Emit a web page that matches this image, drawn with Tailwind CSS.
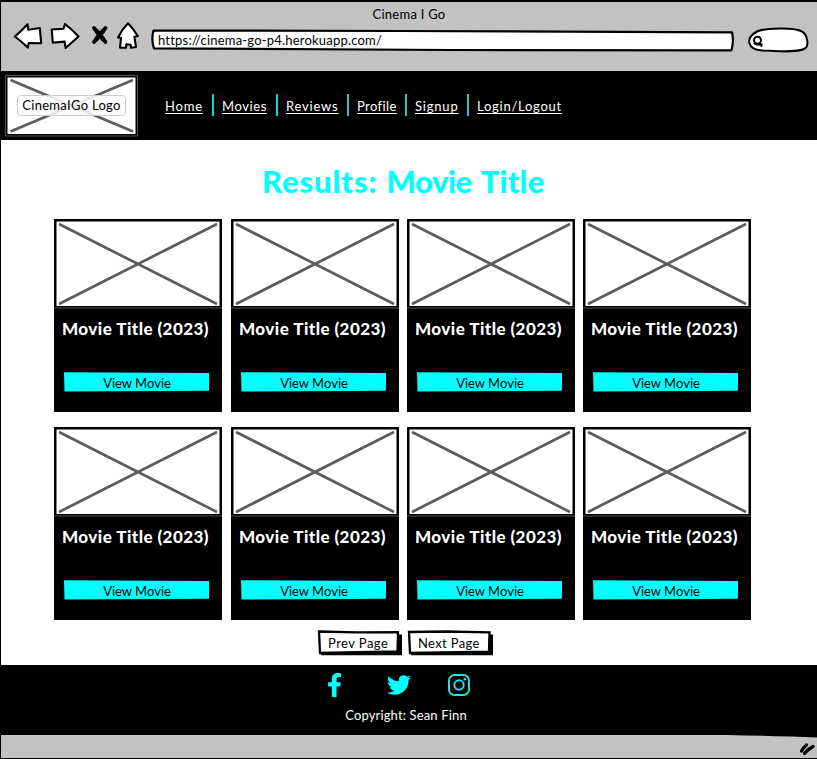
<!DOCTYPE html>
<html lang="en">
<head>
<meta charset="utf-8">
<title>Cinema | Go</title>
<script src="https://cdn.jsdelivr.net/npm/@tailwindcss/browser@4"></script>
</head>
<body class="bg-black">
<div class="flex h-[759px] w-[817px] flex-col overflow-hidden border-l border-t-2 border-black bg-black pb-px font-['Lato','Liberation_Sans',sans-serif] text-[13px] text-black">
  <div class="h-[69px] shrink-0 bg-[#c2c2c2]">
    <div class="h-[18px] text-center leading-[24px]"><span class="tracking-[0.25px]">Cinema I Go</span></div>
    <div class="flex h-[34px] pl-[12px]">
      <svg class="h-[34px] w-[32px] shrink-0" viewBox="13 20 32 34" fill="#fff" stroke="#000" stroke-width="2.1" stroke-linejoin="round"><path d="M14.800 36.500Q21 31.500 27.500 24.300L28.400 29.800 39.800 28 41.200 43.300 28.600 43.100 27.800 47.600Q21 41 14.800 36.500Z"/></svg>
      <svg class="ml-[5px] h-[34px] w-[34px] shrink-0" viewBox="50 20 34 34" fill="#fff" stroke="#000" stroke-width="2.1" stroke-linejoin="round"><path d="M51.700 29.500 63.500 28.700 65 24Q72 29.500 78.500 36.500L65.600 48 64.700 41.600 52.800 42.600Z"/></svg>
      <svg class="ml-[5px] h-[34px] w-[24px] shrink-0" viewBox="89 20 24 34" stroke="#000" stroke-linecap="round" stroke-width="3.800" fill="none"><path d="M94 28 105.500 42M105.500 28 94 42"/><path d="M96.500 31 103 39M103 31 96.500 39" stroke-width="4.600"/></svg>
      <svg class="ml-[2px] h-[34px] w-[28px] shrink-0" viewBox="115 20 28 34" fill="#fff" stroke="#000" stroke-width="2.1" stroke-linejoin="round"><path d="M128 23.300Q133 28.500 137.800 36L134.400 36.800 136 47 131 47.800 130.600 44.800 126.400 44.300 125.900 47.800 120 47.600 121 38 118 37.500Q122 29.500 128 23.300Z"/></svg>
      <div class="relative ml-[7px] h-[34px] w-[586px] shrink-0">
        <svg class="absolute inset-0 h-[34px] w-[586px]" viewBox="150 20 586 34" fill="#fff" stroke="#000" stroke-width="2.2" stroke-linejoin="round"><path d="M153.500 30.500 400 31 732 32.300Q734 41 731.500 50.300L450 50 154 48.300Q151 40 153.500 30.500Z"/></svg>
        <span class="relative ml-[8px] block leading-[41px] tracking-[0.2px]"><span>https://cinema-go-p4.herokuapp.com/</span></span>
      </div>
      <svg class="ml-[11px] h-[34px] w-[64px] shrink-0" viewBox="747 20 64 34" fill="#fff" stroke="#000" stroke-width="2"><path d="M757 31.500C765 28 793 27 801 31 808 34 809 46 805 48.500 795 53.500 775 50.500 762 50.500 747 49.500 745 38 757 31.500Z"/><circle cx="757.500" cy="40.200" r="3.500"/><path d="M754.500 43.500Q758 45 761.800 44.500M759.800 43 761.500 46" stroke-linecap="round"/></svg>
    </div>
  </div>

  <header class="flex h-[69px] shrink-0 pl-[4px] pt-[4px] text-white">
    <div class="relative h-[62px] w-[133px]">
      <svg class="absolute inset-0 h-[62px] w-[133px]" viewBox="0 0 133 62"><path d="M.5 61V.5H132.500V61Z" fill="#000" stroke="#666" stroke-width=".8"/><path d="M2.500 2.500H130.500V59H2.500Z" fill="#fff"/><path d="M5.500 5 128 56.500M128 5 5.500 56.500" stroke="#5c5c5e" stroke-width="2.800"/></svg>
      <div class="absolute left-[12px] top-[20px] flex h-[21px] w-[109px] items-center justify-center rounded-[4px] border border-[#ccc] bg-white/85 text-black"><span class="whitespace-nowrap tracking-[0.3px]">CinemaIGo Logo</span></div>
    </div>
    <nav class="ml-[27px] mt-[19px] flex h-[22px] whitespace-nowrap leading-[24px] underline underline-offset-2">
      <a class="w-[47px] tracking-[0.8px]"><span>Home</span></a>
      <a class="w-[64px] border-l-2 border-[#17d5d9] pl-[8px] tracking-[0.6px]"><span>Movies</span></a>
      <a class="w-[71px] border-l-2 border-[#17d5d9] pl-[8px] tracking-[0.8px]"><span>Reviews</span></a>
      <a class="w-[58px] border-l-2 border-[#40bdc0] pl-[8px] tracking-[0.4px]"><span>Profile</span></a>
      <a class="w-[62px] border-l-2 border-[#40bdc0] pl-[8px] tracking-[0.8px]"><span>Signup</span></a>
      <a class="w-[98px] border-l-2 border-[#40bdc0] pl-[8px] tracking-[0.75px]"><span>Login/Logout</span></a>
    </nav>
  </header>

  <main class="h-[525px] shrink-0 bg-white">
    <h1 class="flex h-[79px] items-center gap-[9px] pl-[261px] pt-[4px] text-[31px] font-black text-[#00ffff]"><span class="tracking-[0.9px]">Results:</span><span class="-tracking-[0.5px]">Movie</span><span class="tracking-[0.2px]">Title</span></h1>
    <div id="movies" class="ml-[53px] grid grid-cols-[177px_176px_176px_168px] grid-rows-[208px_208px]"></div>
    <div class="-mt-[6px] flex pl-[316px]">
      <button class="relative h-[28px] w-[86px]">
        <svg class="absolute inset-0" width="86" height="28" viewBox="0 0 86 28"><path d="M4 5.500H85V26.300H4Z"/><path d="M2 2.500 40 3.300 81 3.200 80.500 22.500 3 24Z" fill="#fff" stroke="#000" stroke-width="2.300"/></svg>
        <span class="absolute left-[11px] top-[4px] whitespace-nowrap leading-[20px] tracking-[0.45px]"><span>Prev Page</span></span>
      </button>
      <button class="relative ml-[4px] h-[28px] w-[88px]">
        <svg class="absolute inset-0" width="88" height="28" viewBox="0 0 88 28"><path d="M4 5.500H86V26.300H4Z"/><path d="M2 3 40 2.500 82.500 3.300 82 22.700 3 24Z" fill="#fff" stroke="#000" stroke-width="2.300"/></svg>
        <span class="absolute left-[11px] top-[4px] whitespace-nowrap leading-[20px] tracking-[0.35px]"><span>Next Page</span></span>
      </button>
    </div>
  </main>

  <footer class="h-[70px] shrink-0 text-white">
    <div class="flex h-[40px] items-center pl-[326px] text-[#00ffff]">
      <svg class="h-[24px] w-[15px]" viewBox="0 0 320 512" preserveAspectRatio="none" fill="currentColor"><path d="M279 288l14-93h-89v-60c0-25 12-50 52-50h41V7S260 0 225 0c-73 0-121 44-121 125v70H23v93h81v224h100V288z"/></svg>
      <svg class="ml-[45px] h-[24px] w-[24px]" viewBox="0 0 512 512" fill="currentColor"><path d="M459.370 151.716c.325 4.548.325 9.097.325 13.645 0 138.720-105.583 298.558-298.558 298.558-59.452 0-114.680-17.219-161.137-47.106 8.447.974 16.568 1.299 25.340 1.299 49.055 0 94.213-16.568 130.274-44.832-46.132-.975-84.792-31.188-98.112-72.772 6.498.974 12.995 1.624 19.818 1.624 9.421 0 18.843-1.300 27.614-3.573-48.081-9.747-84.143-51.980-84.143-102.985v-1.299c13.969 7.797 30.214 12.670 47.431 13.319-28.264-18.843-46.781-51.005-46.781-87.391 0-19.492 5.197-37.360 14.294-52.954 51.655 63.675 129.300 105.258 216.365 109.807-1.624-7.797-2.599-15.918-2.599-24.040 0-57.828 46.782-104.934 104.934-104.934 30.213 0 57.502 12.670 76.670 33.137 23.715-4.548 46.456-13.320 66.599-25.340-7.798 24.366-24.366 44.833-46.132 57.827 21.117-2.273 41.584-8.122 60.426-16.243-14.292 20.791-32.161 39.308-52.628 54.253z"/></svg>
      <svg class="ml-[37px] h-[22px] w-[22px]" viewBox="0 0 22 22" fill="none" stroke="#25dfe2" stroke-width="2"><rect x="1" y="1" width="20" height="20" rx="5.500"/><circle cx="11" cy="11" r="4.700"/><circle cx="16.800" cy="5.200" r="1.300" fill="#25dfe2" stroke="none"/></svg>
    </div>
    <p class="pr-[6px] text-center leading-[21px]"><span class="tracking-[0.15px]">Copyright: Sean Finn</span></p>
  </footer>
  <div class="flex h-[23px] shrink-0 justify-end bg-[#c2c2c2]">
    <svg class="h-[23px] w-[90px]" viewBox="727 735 90 23"><path d="M727 735H817V737.500Q780 736 727 735Z"/><path d="M801.500 751Q803 748 806.500 745M804.500 753.500Q807 750 813 746.500" stroke="#000" stroke-width="3.200" stroke-linecap="round" fill="none"/></svg>
  </div>
</div>
<script>
const card = `<article class="h-[193px] w-[168px] bg-black">
  <svg class="block" width="168" height="90" viewBox="0 0 168 90"><path d="M2.500 2.500H165.500V87H2.500Z" fill="#fff"/><path d="M5 5 163 85M163 5 5 85" stroke="#5b5b5b" stroke-width="2.700"/><path d="M0 89H168" stroke="#555" stroke-width="1"/></svg>
  <h2 class="h-[63px] pl-[8px] pt-[8px] text-[17px] leading-[24px] font-black whitespace-nowrap text-white"><span class="tracking-[0.45px]">Movie Title (2023)</span></h2>
  <button class="ml-[10px] block h-[20px] w-[145px] text-[13px] leading-[23px] text-black relative"><svg class="absolute inset-0" width="145" height="20" viewBox="0 0 145 20"><path d="M0 .3 145 1V18.800L.5 19.600Z" fill="#0ff"/></svg><span class="relative block pl-[1px]"><span>View Movie</span></span></button>
</article>`;
document.getElementById('movies').innerHTML = card.repeat(8);
</script>
</body>
</html>
